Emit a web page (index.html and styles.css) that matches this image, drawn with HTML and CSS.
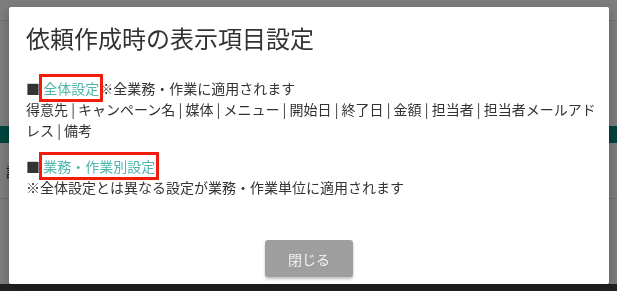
FILE: index.html
```html
<!DOCTYPE html>
<html lang="ja">
<head>
<meta charset="utf-8">
<title>依頼作成時の表示項目設定</title>
<link rel="stylesheet" href="styles.css">
</head>
<body>
<div class="page">
  <div class="page-top"></div>
  <div class="page-row page-row-first"><span class="page-label">レ</span></div>
  <div class="page-band"></div>
  <div class="page-row page-row-second"><span class="page-label">設</span></div>
  <div class="page-rest"></div>
  <div class="page-foot"></div>
</div>
<div class="backdrop">
  <div class="dialog">
    <h1 class="dialog-title">依頼作成時の表示項目設定</h1>
    <div class="dialog-body">
      <p class="section">■ <a class="link link-marked" href="#">全体設定</a>※全業務・作業に適用されます<br>得意先 | キャンペーン名 | 媒体 | メニュー | 開始日 | 終了日 | 金額 | 担当者 | 担当者メールアド<br>レス | 備考</p>
      <p class="section">■ <a class="link link-marked" href="#">業務・作業別設定</a><br>※全体設定とは異なる設定が業務・作業単位に適用されます</p>
    </div>
    <div class="dialog-actions">
      <button class="btn-close" type="button">閉じる</button>
    </div>
  </div>
</div>
</body>
</html>
```
FILE: styles.css
```css
html, body {
  margin: 0;
  padding: 0;
}
body {
  width: 617px;
  height: 291px;
  overflow: hidden;
  background: #fafafa;
  font-family: "Noto Sans CJK JP", "Noto Sans", sans-serif;
  color: #333;
}
.page {
  display: flex;
  flex-direction: column;
  height: 291px;
}
.page-top {
  height: 20px;
  border-bottom: 1px solid #e4e4e4;
}
.page-row {
  display: flex;
  align-items: center;
  padding-left: 6px;
  font-size: 14px;
  color: #222;
}
.page-row-first {
  height: 105px;
}
.page-band {
  height: 17px;
  background: #00897b;
}
.page-row-second {
  height: 55px;
  border-bottom: 1px solid #dcdcdc;
}
.page-rest {
  flex: 1;
}
.page-foot {
  height: 7px;
  background: #444;
}
.backdrop {
  position: fixed;
  inset: 0;
  background: rgba(0, 0, 0, 0.5);
  padding: 7px 8px 0 9px;
}
.dialog {
  width: 600px;
  height: 277px;
  box-sizing: border-box;
  background: #fff;
  border-radius: 2px;
  padding: 15px 17px 7px 17px;
  display: flex;
  flex-direction: column;
  box-shadow: 0 4px 12px rgba(0, 0, 0, 0.25);
}
.dialog-title {
  margin: 0;
  font-size: 24px;
  line-height: 32px;
  font-weight: 400;
  color: #333;
}
.dialog-body {
  margin-top: 24px;
  display: flex;
  flex-direction: column;
  gap: 15px;
}
.section {
  margin: 0;
  font-size: 14px;
  line-height: 21px;
  color: #333;
  white-space: nowrap;
}
.link {
  color: #4db6ac;
  text-decoration: none;
}
.link-marked {
  outline: 3px solid #f21c0c;
  outline-offset: 1px;
}
.dialog-actions {
  margin-top: auto;
  display: flex;
  justify-content: center;
}
.btn-close {
  width: 88px;
  height: 37px;
  border: none;
  border-radius: 3px;
  background: #9e9e9e;
  color: #f2f2f2;
  font-family: "Noto Sans CJK JP", "Noto Sans", sans-serif;
  font-size: 14px;
  box-shadow: 0 2px 3px rgba(0, 0, 0, 0.25);
  padding: 0;
}
```
